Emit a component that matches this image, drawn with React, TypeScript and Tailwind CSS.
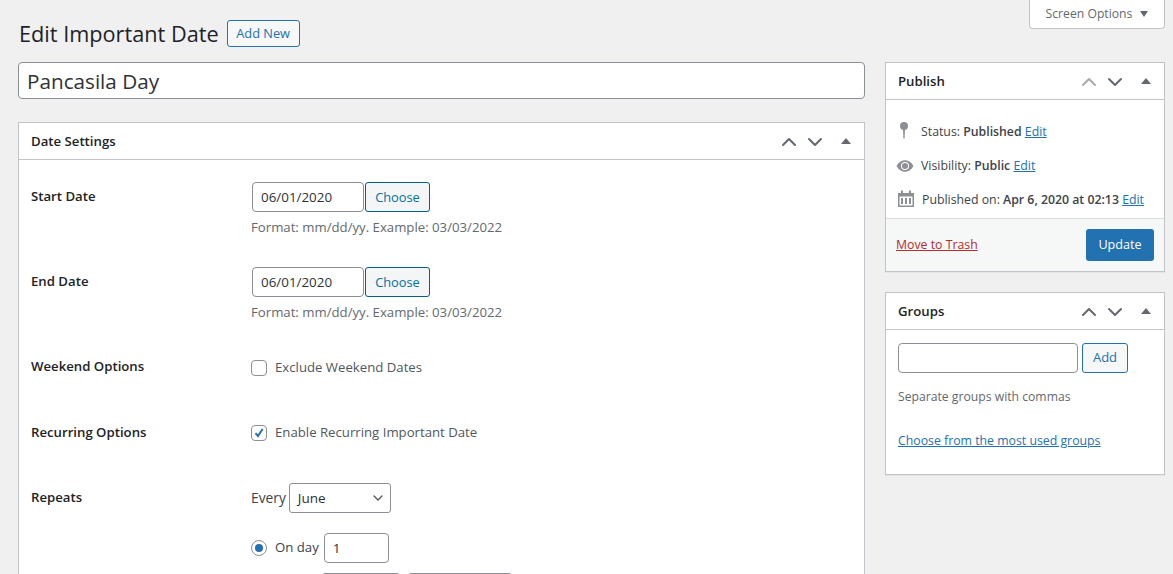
import { ChevronDown, ChevronUp } from "lucide-react";

const BoxControls = ({ faded = false }: { faded?: boolean }) => (
  <div className="flex items-center text-[#646970]">
    <ChevronUp size={24} strokeWidth={2} className={faded ? "text-[#a7aaad]" : ""} />
    <ChevronDown size={24} strokeWidth={2} className="ml-[2px]" />
    <span className="ml-[14px] mr-[13px] -mt-[2px] w-0 h-0 border-x-[5px] border-x-transparent border-b-[6px] border-b-[#646970]" />
  </div>
);

const BoxHeader = ({ title, faded }: { title: string; faded?: boolean }) => (
  <div className="flex items-center justify-between h-[37px] border-b border-[#c3c4c7] pl-3 pt-[2px]">
    <h2 className="text-[13.2px] font-semibold text-[#1d2327]">{title}</h2>
    <BoxControls faded={faded} />
  </div>
);

const DateField = ({ value }: { value: string }) => (
  <div>
    <div className="flex items-center gap-[1px] ml-[1px]">
      <input
        readOnly
        value={value}
        className="w-[112px] h-[30px] px-2 text-[13.4px] text-[#2c3338] bg-white border border-[#8c8f94] rounded-[4px]"
      />
      <button className="h-[30px] w-[65px] pt-[1px] text-[12.8px] text-[#0071a1] bg-[#f3f5f6] border border-[#016087] rounded-[3px]">
        Choose
      </button>
    </div>
    <p className="mt-[6px] text-[13.2px] leading-[18px] text-[#646970]">Format: mm/dd/yy. Example: 03/03/2022</p>
  </div>
);

const Row = ({ label, className, children }: { label: string; className: string; children: React.ReactNode }) => (
  <div className={`flex ${className}`}>
    <div className="w-[220px] shrink-0 pt-[5px] text-[13.2px] font-semibold text-[#1d2327]">{label}</div>
    <div>{children}</div>
  </div>
);

export default function App() {
  return (
    <div
      className="h-[574px] overflow-hidden bg-[#f0f0f1] text-[13.2px] text-[#3c434a]"
      style={{ fontFamily: '"Open Sans", sans-serif' }}
    >
      <div className="flex justify-end pr-2">
        <button className="flex items-center justify-center gap-2 w-[136px] h-[29px] bg-white border border-t-0 border-[#c3c4c7] rounded-b-[4px] text-[12.2px] text-[#646970]">
          Screen Options
          <span className="w-0 h-0 border-x-[4px] border-x-transparent border-t-[6px] border-t-[#646970]" />
        </button>
      </div>

      <div className="flex gap-5 pl-[18px] pr-2">
        <div className="w-[847px] shrink-0">
          <div className="flex items-center h-[33px] -mt-[12px] pl-[1px]">
            <h1 className="pt-[2px] text-[21.7px] text-[#1d2327]">Edit Important Date</h1>
            <button className="ml-[8px] w-[73px] h-[27px] text-[12.8px] font-medium text-[#2271b1] bg-[#f6f7f7] border border-[#2271b1] rounded-[3px]">
              Add New
            </button>
          </div>

          <input
            readOnly
            value="Pancasila Day"
            className="mt-[12px] w-full h-[37px] px-2 text-[20.7px] text-[#2c3338] bg-white border border-[#8c8f94] rounded-[4px]"
          />

          <div className="mt-[23px] bg-white border border-[#c3c4c7] h-[600px]">
            <BoxHeader title="Date Settings" />
            <div className="pl-3 pt-[22px]">
              <Row label="Start Date" className="h-[85px]">
                <DateField value="06/01/2020" />
              </Row>
              <Row label="End Date" className="h-[85px]">
                <DateField value="06/01/2020" />
              </Row>
              <Row label="Weekend Options" className="h-[66px]">
                <label className="flex items-center gap-2 pt-[6px] text-[#50575e]">
                  <span className="w-4 h-4 bg-white border border-[#8c8f94] rounded-[4px]" />
                  Exclude Weekend Dates
                </label>
              </Row>
              <Row label="Recurring Options" className="h-[65px]">
                <label className="flex items-center gap-2 pt-[5px] text-[#50575e]">
                  <span className="flex items-center justify-center w-4 h-4 bg-white border border-[#8c8f94] rounded-[4px]">
                    <svg width="12" height="12" viewBox="0 0 12 12">
                      <path d="M2.5 6.2 5 9l4.6-7" fill="none" stroke="#2271b1" strokeWidth="2" />
                    </svg>
                  </span>
                  Enable Recurring Important Date
                </label>
              </Row>
              <Row label="Repeats" className="">
                <div className="flex items-center gap-[3px] text-[13.8px]">
                  Every
                  <div className="flex items-center justify-between w-[102px] h-[30px] pl-2 pr-[4px] text-[13.5px] text-[#2c3338] bg-white border border-[#8c8f94] rounded-[3px]">
                    June
                    <ChevronDown size={16} strokeWidth={2} className="text-[#50575e]" />
                  </div>
                </div>
                <div className="flex items-center mt-[20px]">
                  <span className="flex items-center justify-center w-4 h-4 bg-white border border-[#8c8f94] rounded-full">
                    <span className="w-2 h-2 bg-[#2271b1] rounded-full" />
                  </span>
                  <span className="ml-2">On day</span>
                  <input
                    readOnly
                    value="1"
                    className="ml-[5px] w-[65px] h-[30px] px-2 text-[13.5px] text-[#2c3338] bg-white border border-[#8c8f94] rounded-[4px]"
                  />
                </div>
                <div className="flex items-center mt-[10px] ml-[71px] gap-[8px]">
                  <div className="w-[78px] h-[30px] bg-white border border-[#8c8f94] rounded-[3px]" />
                  <div className="w-[104px] h-[30px] bg-white border border-[#8c8f94] rounded-[3px]" />
                </div>
              </Row>
            </div>
          </div>
        </div>

        <div className="w-[280px] shrink-0 pt-[33px] text-[12.3px]">
          <div className="bg-white border border-[#c3c4c7] shadow-[0_1px_1px_rgba(0,0,0,0.04)]">
            <BoxHeader title="Publish" faded />
            <div className="px-3 pt-[23px] pb-[9px] flex flex-col gap-[16px] leading-[18px]">
              <div className="flex items-center h-[18px]">
                <svg width="14" height="18" viewBox="0 0 14 18" className="-ml-[1px] mr-[10px] -mt-1 text-[#8c8f94]">
                  <circle cx="7" cy="5" r="4" fill="currentColor" />
                  <path d="M6 8h2l-.4 9.5h-1.2Z" fill="currentColor" />
                </svg>
                <span>
                  Status: <b className="font-semibold">Published</b> <a className="text-[#2271b1] underline">Edit</a>
                </span>
              </div>
              <div className="flex items-center h-[18px]">
                <svg width="18" height="14" viewBox="0 0 18 14" className="-ml-[2px] mr-[7px] text-[#8c8f94]">
                  <path d="M0.5 7C3 2.8 6 1.2 9 1.2S15 2.8 17.5 7C15 11.2 12 12.8 9 12.8S3 11.2.5 7Z" fill="currentColor" />
                  <circle cx="9" cy="7" r="4" fill="white" />
                  <circle cx="9" cy="7" r="3" fill="currentColor" />
                </svg>
                <span>
                  Visibility: <b className="font-semibold">Public</b> <a className="text-[#2271b1] underline">Edit</a>
                </span>
              </div>
              <div className="flex items-center h-[18px]">
                <svg width="16" height="17" viewBox="0 0 16 17" className="mr-[8px] -mt-1 text-[#8c8f94]">
                  <path d="M0 3h16v14H0Z" fill="currentColor" />
                  <path d="M1.5 6.5h13v9h-13Z" fill="white" />
                  <path d="M3 0.5h2v4H3ZM11 0.5h2v4h-2ZM3 8h2v6H3ZM7 8h2v6H7ZM11 8h2v6h-2Z" fill="currentColor" />
                </svg>
                <span className="whitespace-nowrap">
                  Published on: <b className="font-semibold">Apr 6, 2020 at 02:13</b>{" "}
                  <a className="text-[#2271b1] underline">Edit</a>
                </span>
              </div>
            </div>
            <div className="flex items-center justify-between h-[53px] pl-[10px] pr-[10px] bg-[#f6f7f7] border-t border-[#dcdcde]">
              <a className="text-[#b32d2e] underline">Move to Trash</a>
              <button className="w-[68px] h-[32px] text-[12.6px] text-white bg-[#2271b1] rounded-[3px]">Update</button>
            </div>
          </div>

          <div className="mt-5 bg-white border border-[#c3c4c7] shadow-[0_1px_1px_rgba(0,0,0,0.04)]">
            <BoxHeader title="Groups" />
            <div className="px-3 pt-[13px] pb-[24px]">
              <div className="flex gap-[4px]">
                <input readOnly className="w-[180px] h-[30px] bg-white border border-[#8c8f94] rounded-[4px]" />
                <button className="w-[46px] h-[30px] text-[13px] text-[#2271b1] bg-[#f6f7f7] border border-[#2271b1] rounded-[3px]">
                  Add
                </button>
              </div>
              <p className="mt-[15px] text-[12.2px] leading-[18px] text-[#646970]">Separate groups with commas</p>
              <a className="block mt-[26px] text-[#2271b1] underline">Choose from the most used groups</a>
            </div>
          </div>
        </div>
      </div>
    </div>
  );
}
